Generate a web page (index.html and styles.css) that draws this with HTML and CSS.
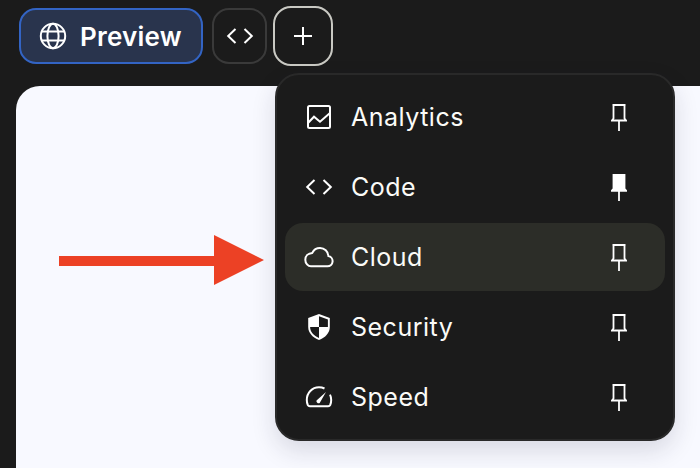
FILE: index.html
```html
<!DOCTYPE html>
<html lang="en">
<head>
<meta charset="utf-8">
<title>Preview</title>
<link rel="stylesheet" href="styles.css">
</head>
<body>
<header class="toolbar">
  <button class="tab tab-active">
    <svg class="icon-globe" viewBox="0 0 28 28" fill="none" stroke="currentColor" stroke-width="2"><circle cx="14" cy="14" r="12.2"/><ellipse cx="14" cy="14" rx="5.6" ry="12.2"/><path d="M2.6 9.6h22.8M2.6 18.4h22.8"/></svg>
    <span>Preview</span>
  </button>
  <button class="tab tab-code" aria-label="Code">
    <svg class="icon" viewBox="0 0 28 28" fill="none" stroke="currentColor" stroke-width="2"><path d="M9.500 7 2.200 14l7.300 7M18.500 7l7.300 7-7.300 7"/></svg>
  </button>
  <button class="tab tab-add" aria-label="Add">
    <svg class="icon-plus" viewBox="0 0 20 20" fill="none" stroke="currentColor" stroke-width="2"><path d="M10 1v18M1 10h18"/></svg>
  </button>
</header>
<main class="canvas"></main>

<svg class="arrow" viewBox="0 0 206 50"><path d="M0 21h155V0l50 25-50 25V31H0z" fill="#ec4125"/></svg>

<div class="menu">
  <div class="row">
    <svg class="icon" viewBox="0 0 28 28" fill="none" stroke="currentColor" stroke-width="2"><rect x="3" y="3" width="22" height="22" rx="1.500"/><path d="M3 20l6-6.300 6 5 10-8.700"/></svg>
    <span class="label">Analytics</span>
    <svg class="pin" viewBox="0 0 16 27" fill="none" stroke="currentColor" stroke-width="1.800"><path d="M1.500 1h13M2.500 1v13.500L1 16.500h14l-1.500-2V1M8 17v10"/></svg>
  </div>
  <div class="row">
    <svg class="icon" viewBox="0 0 28 28" fill="none" stroke="currentColor" stroke-width="2"><path d="M9.500 7 2.200 14l7.300 7M18.500 7l7.300 7-7.300 7"/></svg>
    <span class="label">Code</span>
    <svg class="pin" viewBox="0 0 16 27" fill="currentColor"><path d="M1.600 0h12.800v14.500l1.600 1.700v1.600H0v-1.600l1.600-1.700z"/><path d="M7.100 17h1.800v10H7.100z"/></svg>
  </div>
  <div class="row row-hover">
    <svg class="icon-cloud" viewBox="0 0 30 22" fill="none" stroke="currentColor" stroke-width="2"><path d="M7 20.300h16.500a5.200 5.200 0 0 0 .9-10.300A8.500 8.500 0 0 0 16 2a8.500 8.500 0 0 0-7.700 4.900C4.300 7.200 1.300 10 1.300 13.800c0 3.500 2.700 6.500 5.700 6.500z"/></svg>
    <span class="label">Cloud</span>
    <svg class="pin" viewBox="0 0 16 27" fill="none" stroke="currentColor" stroke-width="1.800"><path d="M1.500 1h13M2.500 1v13.500L1 16.500h14l-1.500-2V1M8 17v10"/></svg>
  </div>
  <div class="row">
    <svg class="icon" viewBox="0 0 28 28"><path d="M14 .9 24.800 5v9c0 6-4.500 10.600-10.800 13.100C7.700 24.600 3.200 20 3.200 14V5z" fill="#fff"/><path d="M14 3.200 22.900 6.400V14H14zM14 14v10.900C8.800 22.800 5.100 19 5.100 14z" fill="#1b1b1b"/></svg>
    <span class="label">Security</span>
    <svg class="pin" viewBox="0 0 16 27" fill="none" stroke="currentColor" stroke-width="1.800"><path d="M1.500 1h13M2.500 1v13.500L1 16.500h14l-1.500-2V1M8 17v10"/></svg>
  </div>
  <div class="row">
    <svg class="icon" viewBox="0 0 28 28" fill="none" stroke="currentColor" stroke-width="2"><path d="M19.500 5.500C17.800 4.700 16 4.300 14 4.300 7 4.300 1.800 10 1.800 17c0 2 .4 3.700 1 5 .4.800 1 1.200 2 1.200h18.400c1 0 1.600-.4 2-1.200.6-1.300 1-3 1-5 0-2-.4-3.800-1.200-5.400"/><path d="M11.500 17.500 21 9l-6.300 11a2.200 2.200 0 0 1-3.200-2.500z" fill="currentColor" stroke="none"/></svg>
    <span class="label">Speed</span>
    <svg class="pin" viewBox="0 0 16 27" fill="none" stroke="currentColor" stroke-width="1.800"><path d="M1.500 1h13M2.500 1v13.500L1 16.500h14l-1.500-2V1M8 17v10"/></svg>
  </div>
</div>
</body>
</html>
```
FILE: styles.css
```css
* { box-sizing: border-box; }
html, body { height: 100%; }
body {
  margin: 0;
  height: 468px;
  overflow: hidden;
  background: #1b1b1b;
  color: #fff;
  font-family: Inter, "Liberation Sans", sans-serif;
  display: flex;
  flex-direction: column;
  padding-left: 16px;
  position: relative;
}
.toolbar {
  height: 86px;
  display: flex;
  align-items: flex-start;
  padding: 6px 0 0 3px;
  gap: 6px;
}
.tab {
  display: flex;
  align-items: center;
  justify-content: center;
  background: #1b1b1b;
  color: #fff;
  font: inherit;
  padding: 0;
  margin: 0;
}
.tab-active {
  width: 184px;
  height: 56px;
  margin: 2px 3px 0 0;
  padding-left: 18px;
  justify-content: flex-start;
  gap: 13px;
  border: 2px solid #3364c4;
  border-radius: 17px;
  background: #29344d;
  font-size: 26px;
  font-weight: 600;
  letter-spacing: 0.2px;
}
.tab-code {
  width: 55px;
  height: 56px;
  margin-top: 2px;
  border: 2px solid #3a3a3a;
  border-radius: 17px;
}
.tab-add {
  width: 60px;
  height: 60px;
  border: 2px solid #c9c9c3;
  border-radius: 18px;
}
.icon-globe { width: 28px; height: 28px; }
.icon-plus { width: 20px; height: 20px; }
.icon { width: 28px; height: 28px; flex: none; }
.icon-cloud { width: 30px; height: 22px; flex: none; margin: 0 -1px; }
.canvas {
  flex: 1;
  background: #f8f9ff;
  border-radius: 24px 0 0 0;
}
.arrow {
  position: absolute;
  left: 59px;
  top: 235px;
  width: 206px;
  height: 50px;
}
.menu {
  position: absolute;
  left: 275px;
  top: 73px;
  width: 400px;
  height: 368px;
  padding: 8px;
  display: flex;
  flex-direction: column;
  gap: 2px;
  background: #1b1b1b;
  border: 2px solid #292929;
  border-radius: 24px;
  box-shadow: 0 10px 24px rgba(30, 30, 60, 0.14);
}
.row {
  height: 68px;
  flex: none;
  display: flex;
  align-items: center;
  padding: 0 38px 0 20px;
  border-radius: 18px;
}
.row-hover { background: #2c2d28; }
.label {
  flex: 1;
  margin-left: 18px;
  font-size: 25px;
  letter-spacing: 0.5px;
  color: #fbfbf8;
}
.pin { width: 16px; height: 27px; flex: none; }
```
